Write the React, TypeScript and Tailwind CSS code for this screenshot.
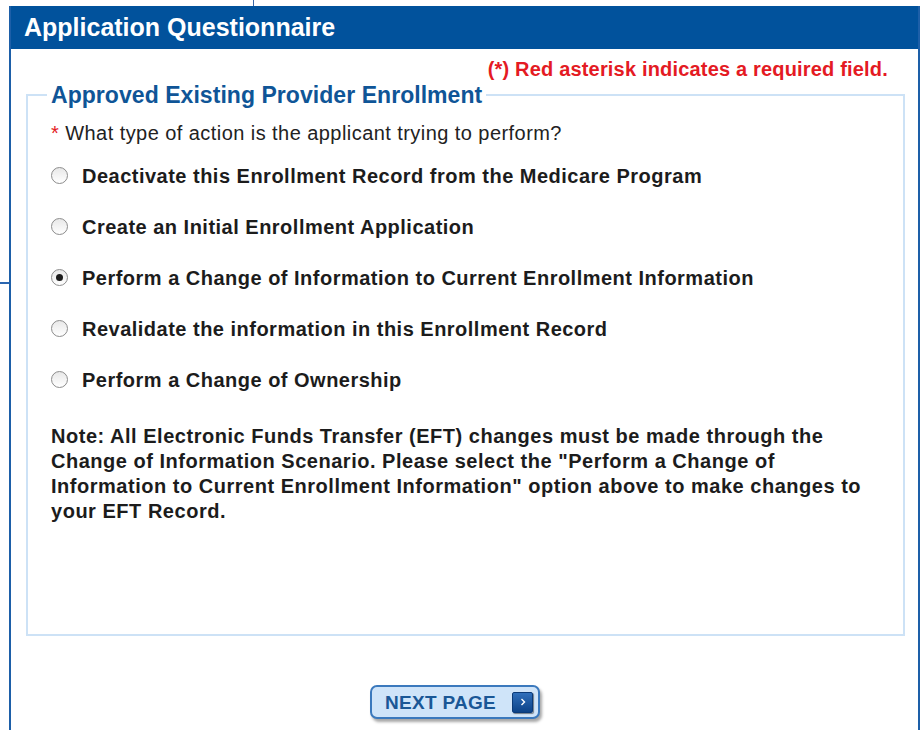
import React from "react";

const options = [
  "Deactivate this Enrollment Record from the Medicare Program",
  "Create an Initial Enrollment Application",
  "Perform a Change of Information to Current Enrollment Information",
  "Revalidate the information in this Enrollment Record",
  "Perform a Change of Ownership",
];

function Radio({ checked }: { checked: boolean }) {
  return (
    <span className="flex h-[17px] w-[17px] shrink-0 items-center justify-center rounded-full border border-[#8c8c8c] bg-linear-to-b from-[#e8e8e8] to-white">
      {checked && <span className="h-[7px] w-[7px] rounded-full bg-[#1b1b1b]" />}
    </span>
  );
}

export default function App() {
  const selected = 2;
  return (
    <div
      className="relative min-h-[730px] bg-white pl-[9px] pt-[6px] text-[#1c1c1c]"
      style={{ fontFamily: '"Liberation Sans", Arial, sans-serif' }}
    >
      {/* edges of the frame behind the panel */}
      <span className="absolute left-[253px] top-0 h-[6px] w-[1px] bg-[#3a67a8]" />
      <span className="absolute left-0 top-[282px] h-[2px] w-[9px] bg-[#2a66b0]" />

      <div className="w-[911px] border-x-2 border-x-[#1d5fa8]">
        <div className="flex h-[43px] items-center bg-[#01529c] pl-[13px]">
          <h1 className="text-[25px] font-bold leading-none text-white">
            Application Questionnaire
          </h1>
        </div>

        <div className="pl-[15px] pr-[13px] pt-[8px]">
          <p className="pr-[17px] text-right text-[20px] font-bold leading-[24px] tracking-[0.18px] text-[#e41a23]">
            (*) Red asterisk indicates a required field.
          </p>

          <fieldset className="mt-[1px] border-2 border-[#cde2f6] pb-[110px] pl-[23px]">
            <legend className="-ml-[4px] px-[4px] text-[23px] font-bold leading-[26px] tracking-[0.05px] text-[#0f5597]">
              Approved Existing Provider Enrollment
            </legend>

            <p className="mt-[13px] text-[20px] leading-[24px] tracking-[0.44px] text-[#222]">
              <span className="text-[#e41a23]">* </span>
              What type of action is the applicant trying to perform?
            </p>

            <div className="mt-[5px] flex flex-col">
              {options.map((label, i) => (
                <label key={label} className="flex h-[51px] items-center">
                  <Radio checked={i === selected} />
                  <span className="ml-[14px] text-[20px] font-bold leading-[24px] tracking-[0.49px]">
                    {label}
                  </span>
                </label>
              ))}
            </div>

            <p className="mt-[19px] w-[820px] text-[20px] font-bold leading-[25px] tracking-[0.52px]">
              Note: All Electronic Funds Transfer (EFT) changes must be made through the
              Change of Information Scenario. Please select the "Perform a Change of
              Information to Current Enrollment Information" option above to make changes
              to your EFT Record.
            </p>
          </fieldset>
        </div>

        <div className="flex justify-center pr-[19px] pt-[49px] pb-[20px]">
          <button className="flex h-[34px] w-[170px] items-center justify-between rounded-[7px] border-2 border-[#3b79bd] bg-[#cfe4f9] pl-[13px] pr-[5px] shadow-[2px_3px_3px_rgba(0,0,0,0.35)]">
            <span className="text-[19px] font-bold leading-none tracking-[0.3px] text-[#1a5796]">
              NEXT PAGE
            </span>
            <span className="flex h-[21px] w-[21px] items-center justify-center rounded-[2px] border border-[#0a3a78] bg-linear-to-b from-[#2f6fbb] to-[#0c4388] shadow-[1px_1px_1px_rgba(0,0,0,0.45)]">
              <svg width="12" height="12" viewBox="0 0 12 12">
                <path d="M4.5 3 L7.5 6 L4.5 9" fill="none" stroke="white" strokeWidth="1.4" />
              </svg>
            </span>
          </button>
        </div>
      </div>
    </div>
  );
}
